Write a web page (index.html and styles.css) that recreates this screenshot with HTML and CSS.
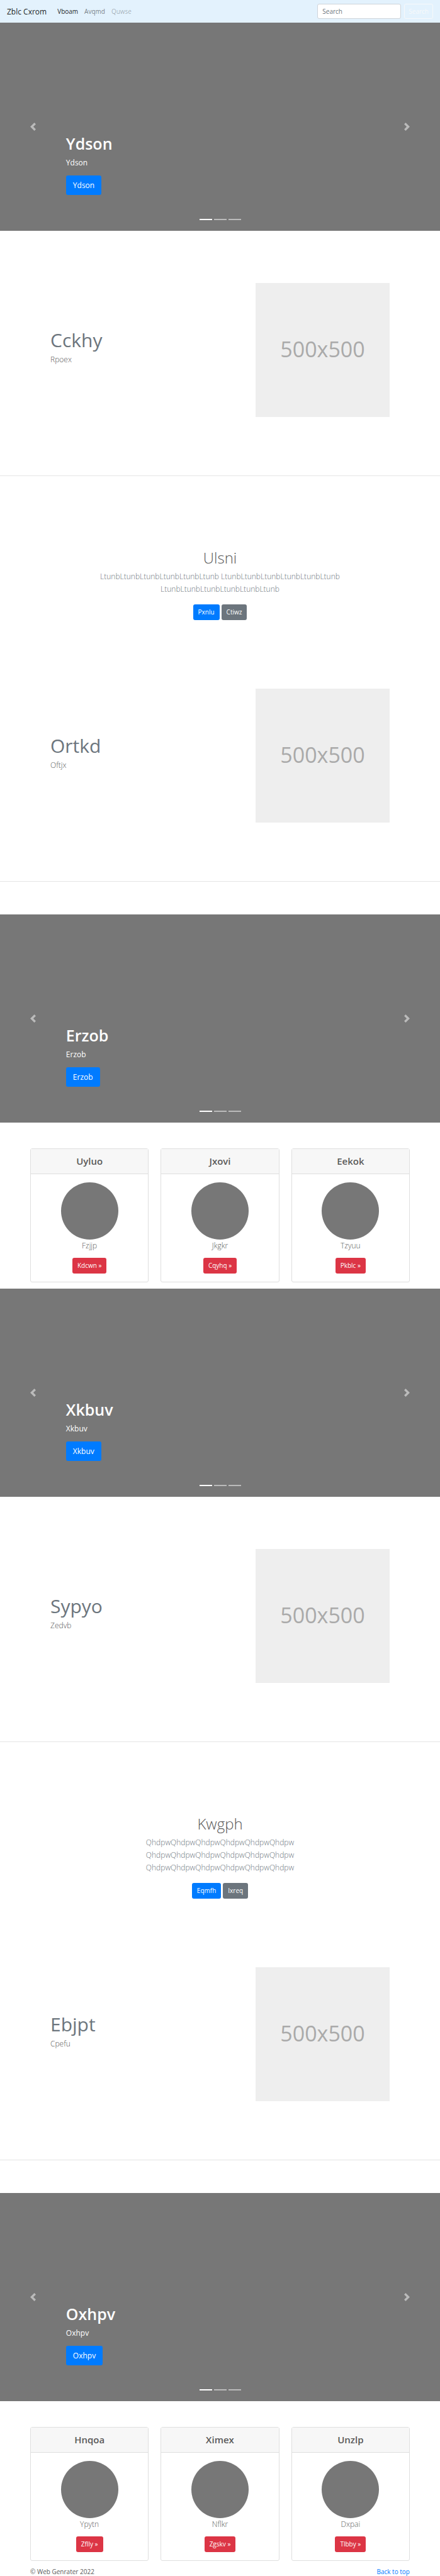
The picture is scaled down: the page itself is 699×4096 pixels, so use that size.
FILE: index.html
```html
<!DOCTYPE html>
<html lang="en">
<head>
<meta charset="utf-8">
<meta name="viewport" content="width=device-width, initial-scale=1">
<title>Zblc Cxrom</title>
<link rel="stylesheet" href="styles.css">
</head>
<body>
<header class="navbar" id="top">
  <a class="brand" href="#">Zblc Cxrom</a>
  <nav class="nav-links">
    <a class="nav-link active" href="#">Vboam</a>
    <a class="nav-link" href="#">Avqmd</a>
    <a class="nav-link disabled" href="#">Quwse</a>
  </nav>
  <form class="search-form">
    <input class="search-input" type="search" placeholder="Search" aria-label="Search">
    <button class="search-button" type="button">Search</button>
  </form>
</header>
<main>
  <section class="carousel">
    <button class="control" type="button" aria-label="Previous"><svg class="control-icon" viewBox="0 0 8 8"><path d="M5.25 0l-4 4 4 4 1.5-1.5-2.5-2.5 2.5-2.5-1.5-1.5z"/></svg></button>
    <div class="caption">
      <h1 class="caption-title">Ydson</h1>
      <p class="caption-text">Ydson</p>
      <a class="btn btn-large btn-primary" href="#">Ydson</a>
    </div>
    <button class="control" type="button" aria-label="Next"><svg class="control-icon" viewBox="0 0 8 8"><path d="M2.75 0l-1.5 1.5 2.5 2.5-2.5 2.5 1.5 1.5 4-4-4-4z"/></svg></button>
    <div class="indicators"><span class="indicator current"></span><span class="indicator"></span><span class="indicator"></span></div>
  </section>

  <section class="feature">
    <div class="feature-copy">
      <h2 class="feature-title">Cckhy</h2>
      <p class="feature-text">Rpoex</p>
    </div>
    <div class="placeholder">500x500</div>
  </section>

  <section class="intro">
    <h2 class="intro-title">Ulsni</h2>
    <p class="intro-text">LtunbLtunbLtunbLtunbLtunbLtunb LtunbLtunbLtunbLtunbLtunbLtunb LtunbLtunbLtunbLtunbLtunbLtunb</p>
    <div class="intro-actions">
      <a class="btn btn-primary" href="#">Pxnlu</a>
      <a class="btn btn-secondary" href="#">Ctiwz</a>
    </div>
  </section>

  <section class="feature feature-last">
    <div class="feature-copy">
      <h2 class="feature-title">Ortkd</h2>
      <p class="feature-text">Oftjx</p>
    </div>
    <div class="placeholder">500x500</div>
  </section>

  <section class="carousel">
    <button class="control" type="button" aria-label="Previous"><svg class="control-icon" viewBox="0 0 8 8"><path d="M5.25 0l-4 4 4 4 1.5-1.5-2.5-2.5 2.5-2.5-1.5-1.5z"/></svg></button>
    <div class="caption">
      <h1 class="caption-title">Erzob</h1>
      <p class="caption-text">Erzob</p>
      <a class="btn btn-large btn-primary" href="#">Erzob</a>
    </div>
    <button class="control" type="button" aria-label="Next"><svg class="control-icon" viewBox="0 0 8 8"><path d="M2.75 0l-1.5 1.5 2.5 2.5-2.5 2.5 1.5 1.5 4-4-4-4z"/></svg></button>
    <div class="indicators"><span class="indicator current"></span><span class="indicator"></span><span class="indicator"></span></div>
  </section>

  <section class="cards">
    <article class="card">
      <h4 class="card-header">Uyluo</h4>
      <div class="card-body">
        <div class="avatar"></div>
        <p class="card-text">Fzjjp</p>
        <a class="btn btn-danger" href="#">Kdcwn »</a>
      </div>
    </article>
    <article class="card">
      <h4 class="card-header">Jxovi</h4>
      <div class="card-body">
        <div class="avatar"></div>
        <p class="card-text">Jkgkr</p>
        <a class="btn btn-danger" href="#">Cqyhq »</a>
      </div>
    </article>
    <article class="card">
      <h4 class="card-header">Eekok</h4>
      <div class="card-body">
        <div class="avatar"></div>
        <p class="card-text">Tzyuu</p>
        <a class="btn btn-danger" href="#">Pkblc »</a>
      </div>
    </article>
  </section>

  <section class="carousel">
    <button class="control" type="button" aria-label="Previous"><svg class="control-icon" viewBox="0 0 8 8"><path d="M5.25 0l-4 4 4 4 1.5-1.5-2.5-2.5 2.5-2.5-1.5-1.5z"/></svg></button>
    <div class="caption">
      <h1 class="caption-title">Xkbuv</h1>
      <p class="caption-text">Xkbuv</p>
      <a class="btn btn-large btn-primary" href="#">Xkbuv</a>
    </div>
    <button class="control" type="button" aria-label="Next"><svg class="control-icon" viewBox="0 0 8 8"><path d="M2.75 0l-1.5 1.5 2.5 2.5-2.5 2.5 1.5 1.5 4-4-4-4z"/></svg></button>
    <div class="indicators"><span class="indicator current"></span><span class="indicator"></span><span class="indicator"></span></div>
  </section>

  <section class="feature">
    <div class="feature-copy">
      <h2 class="feature-title">Sypyo</h2>
      <p class="feature-text">Zedvb</p>
    </div>
    <div class="placeholder">500x500</div>
  </section>

  <section class="intro">
    <h2 class="intro-title">Kwgph</h2>
    <p class="intro-text">QhdpwQhdpwQhdpwQhdpwQhdpwQhdpw QhdpwQhdpwQhdpwQhdpwQhdpwQhdpw QhdpwQhdpwQhdpwQhdpwQhdpwQhdpw</p>
    <div class="intro-actions">
      <a class="btn btn-primary" href="#">Eqmfh</a>
      <a class="btn btn-secondary" href="#">Ixreq</a>
    </div>
  </section>

  <section class="feature feature-last">
    <div class="feature-copy">
      <h2 class="feature-title">Ebjpt</h2>
      <p class="feature-text">Cpefu</p>
    </div>
    <div class="placeholder">500x500</div>
  </section>

  <section class="carousel">
    <button class="control" type="button" aria-label="Previous"><svg class="control-icon" viewBox="0 0 8 8"><path d="M5.25 0l-4 4 4 4 1.5-1.5-2.5-2.5 2.5-2.5-1.5-1.5z"/></svg></button>
    <div class="caption">
      <h1 class="caption-title">Oxhpv</h1>
      <p class="caption-text">Oxhpv</p>
      <a class="btn btn-large btn-primary" href="#">Oxhpv</a>
    </div>
    <button class="control" type="button" aria-label="Next"><svg class="control-icon" viewBox="0 0 8 8"><path d="M2.75 0l-1.5 1.5 2.5 2.5-2.5 2.5 1.5 1.5 4-4-4-4z"/></svg></button>
    <div class="indicators"><span class="indicator current"></span><span class="indicator"></span><span class="indicator"></span></div>
  </section>

  <section class="cards">
    <article class="card">
      <h4 class="card-header">Hnqoa</h4>
      <div class="card-body">
        <div class="avatar"></div>
        <p class="card-text">Ypytn</p>
        <a class="btn btn-danger" href="#">Zflly »</a>
      </div>
    </article>
    <article class="card">
      <h4 class="card-header">Ximex</h4>
      <div class="card-body">
        <div class="avatar"></div>
        <p class="card-text">Nflkr</p>
        <a class="btn btn-danger" href="#">Zgskv »</a>
      </div>
    </article>
    <article class="card">
      <h4 class="card-header">Unzlp</h4>
      <div class="card-body">
        <div class="avatar"></div>
        <p class="card-text">Dxpai</p>
        <a class="btn btn-danger" href="#">Tlbby »</a>
      </div>
    </article>
  </section>
</main>
<footer class="footer">
  <span>© Web Genrater 2022</span>
  <a class="back-link" href="#top">Back to top</a>
</footer>
</body>
</html>
```
FILE: styles.css
```css
*,
*::before,
*::after {
  box-sizing: border-box;
}

body {
  margin: 0;
  background: #fff;
  color: #5a5a5a;
  font-family: "Open Sans", "Noto Sans", sans-serif;
  font-size: 10px;
  line-height: 15px;
}

h1,
h2,
h4,
p {
  margin: 0;
}

a {
  text-decoration: none;
}

/* Top bar */
.navbar {
  display: flex;
  align-items: center;
  height: 36px;
  padding: 0 11px;
  background: #e3f2fd;
}

.brand {
  margin-right: 17px;
  color: rgba(0, 0, 0, 0.9);
  font-size: 12px;
}

.nav-links {
  display: flex;
  gap: 10px;
}

.nav-link {
  color: rgba(0, 0, 0, 0.5);
}

.nav-link.active {
  color: rgba(0, 0, 0, 0.9);
}

.nav-link.disabled {
  color: rgba(0, 0, 0, 0.3);
}

.search-form {
  display: flex;
  gap: 5px;
  margin-left: auto;
}

.search-input,
.search-button {
  height: 24px;
  border: 1px solid #ced4da;
  border-radius: 3px;
  font: inherit;
}

.search-input {
  width: 133px;
  padding: 0 7px;
  background: #fff;
  color: #495057;
}

.search-input::placeholder {
  color: #6c757d;
  opacity: 1;
}

.search-button {
  padding: 0 6px;
  border-color: #f8f9fa;
  background: transparent;
  color: #f8f9fa;
}

/* Buttons */
.btn {
  display: inline-block;
  padding: 5px 8px;
  border-radius: 3px;
  color: #fff;
  font-size: 10px;
  line-height: 15px;
}

.btn-large {
  padding: 6px 11px;
  font-size: 12px;
  line-height: 19px;
}

.btn-primary {
  background: #007bff;
}

.btn-secondary {
  background: #6c757d;
}

.btn-danger {
  background: #dc3545;
}

/* Carousel */
.carousel {
  position: relative;
  display: grid;
  grid-template-columns: 15% 1fr 15%;
  height: 331px;
  background: #777;
  color: #fff;
}

.control {
  display: flex;
  align-items: center;
  justify-content: center;
  padding: 0;
  border: 0;
  background: none;
  opacity: 0.5;
}

.control-icon {
  width: 13px;
  height: 13px;
  fill: #fff;
}

.caption {
  align-self: end;
  padding-bottom: 57px;
}

.caption-title {
  margin-bottom: 5px;
  font-size: 25px;
  font-weight: 600;
  line-height: 31px;
}

.caption-text {
  margin-bottom: 11px;
  font-size: 12px;
  line-height: 19px;
}

.caption .btn {
  display: block;
  width: max-content;
}

.indicators {
  position: absolute;
  right: 0;
  bottom: 17px;
  left: 0;
  display: flex;
  justify-content: center;
  gap: 3px;
}

.indicator {
  width: 20px;
  height: 2px;
  background: #fff;
  opacity: 0.5;
}

.indicator.current {
  opacity: 1;
}

/* Feature row */
.feature {
  display: flex;
  align-items: center;
  justify-content: space-between;
  padding: 83px 80px 93px;
  border-bottom: 1px solid #e5e5e5;
}

.feature-last {
  margin-bottom: 52px;
}

.feature-copy {
  padding-bottom: 12px;
}

.feature-title {
  margin-bottom: 2px;
  color: #6c757d;
  font-size: 30px;
  font-weight: 400;
  line-height: 39px;
}

.feature-text {
  font-size: 12px;
  font-weight: 300;
  line-height: 19px;
}

.placeholder {
  display: flex;
  align-items: center;
  justify-content: center;
  width: 213px;
  padding-bottom: 4px;
  aspect-ratio: 1;
  background: #eee;
  color: #aaa;
  font-size: 34px;
  line-height: 46px;
}

/* Centered intro */
.intro {
  display: flex;
  flex-direction: column;
  align-items: center;
  padding: 114px 20px 26px;
  text-align: center;
}

.intro-title {
  margin-bottom: 4px;
  font-size: 24px;
  font-weight: 300;
  line-height: 32px;
}

.intro-text {
  max-width: 440px;
  margin-bottom: 14px;
  color: #6c757d;
  font-size: 12px;
  font-weight: 300;
  line-height: 20px;
}

.intro-actions {
  display: flex;
  gap: 3px;
}

/* Cards */
.cards {
  display: grid;
  grid-template-columns: repeat(3, 1fr);
  gap: 19px;
  padding: 41px 48px 10px;
}

.card {
  border: 1px solid #dfdfdf;
  border-radius: 3px;
  text-align: center;
}

.card-header {
  padding: 8px;
  border-bottom: 1px solid #dfdfdf;
  background: #f7f7f7;
  font-size: 15px;
  font-weight: 600;
  line-height: 23px;
}

.card-body {
  display: flex;
  flex-direction: column;
  align-items: center;
  padding: 13px;
}

.avatar {
  width: 91px;
  height: 91px;
  border-radius: 50%;
  background: #777;
}

.card-text {
  margin-bottom: 10px;
  font-size: 12px;
  font-weight: 300;
  line-height: 19px;
}

/* Footer */
.footer {
  display: flex;
  justify-content: space-between;
  padding: 0 48px;
  line-height: 14px;
}

.back-link {
  color: #007bff;
}
```
